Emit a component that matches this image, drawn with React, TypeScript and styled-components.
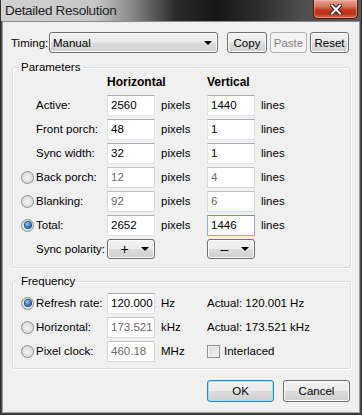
import React from 'react'
import styled, { createGlobalStyle, css } from 'styled-components'

const GlobalStyle = createGlobalStyle`
  html, body {
    margin: 0;
    padding: 0;
    background: #ffffff;
  }
  body {
    font-family: "Liberation Sans", Arial, sans-serif;
    font-size: 11.5px;
    color: #000000;
  }
`

const Window = styled.div`
  width: 362px;
  height: 415px;
  box-sizing: border-box;
  display: flex;
  flex-direction: column;
  border: 1px solid #2e2e2e;
  border-top: none;
  background: #4a4a4a;
`

const TitleBar = styled.div`
  height: 21px;
  flex: none;
  display: flex;
  align-items: flex-start;
  background: linear-gradient(
    to right,
    #d2d2d2 0,
    #c6c6c6 95px,
    #8a8a8a 130px,
    #2a2a2a 175px,
    #161616 215px,
    #2c2c2c 255px,
    #4e4e4e 300px,
    #5a5a5a 100%
  );
`

const Title = styled.div`
  flex: 1;
  padding: 3px 0 0 4px;
  font-size: 13.5px;
  letter-spacing: -0.3px;
  color: #1e1e1e;
  line-height: 16px;
`

const CloseButton = styled.div`
  width: 45px;
  height: 19px;
  margin-right: 3px;
  box-sizing: border-box;
  border: 1px solid #4a1a12;
  border-top: none;
  border-radius: 0 0 5px 5px;
  background: linear-gradient(to bottom, #e7a593 0, #d67861 35%, #c2391e 55%, #b8321a 75%, #d36a4a 100%);
  box-shadow: inset 0 0 0 1px rgba(255, 200, 180, 0.45);
  display: flex;
  align-items: center;
  justify-content: center;
`

const Body = styled.div`
  flex: 1;
  margin: 0 1px 1px;
  border: 1px solid #9a9a9a;
  border-top-color: #8a8a8a;
  background: #f0f0f0;
  padding: 10px 8px 0 8px;
  display: flex;
  flex-direction: column;
`

const TimingRow = styled.div`
  display: flex;
  align-items: center;
  height: 21px;
`

const TimingLabel = styled.span`
  width: 38px;
`

const buttonFace = css`
  box-sizing: border-box;
  border: 1px solid #707070;
  border-radius: 3px;
  background: linear-gradient(to bottom, #f2f2f2 0, #ebebeb 48%, #dddddd 52%, #cfcfcf 100%);
  box-shadow: inset 0 0 0 1px #fcfcfc;
`

const Select = styled.div<{ $width: number; $center?: boolean; $col?: number }>`
  ${buttonFace}
  grid-column: ${({ $col }) => $col ?? 'auto'};
  width: ${({ $width }) => $width}px;
  height: ${({ $center }) => ($center ? 20 : 21)}px;
  display: flex;
  align-items: center;
  padding: 0 5px 0 ${({ $center }) => ($center ? 0 : 3)}px;
  justify-content: space-between;
`

const SelectValue = styled.span<{ $center?: boolean }>`
  ${({ $center }) =>
    $center &&
    css`
      flex: 1;
      text-align: center;
      font-size: 14px;
    `}
`

const Arrow = styled.span`
  width: 0;
  height: 0;
  border-left: 4px solid transparent;
  border-right: 4px solid transparent;
  border-top: 4px solid #000000;
`

const Button = styled.div<{ $width: number; $height?: number; $disabled?: boolean; $default?: boolean }>`
  ${buttonFace}
  width: ${({ $width }) => $width}px;
  height: ${({ $height }) => $height ?? 21}px;
  display: flex;
  align-items: center;
  justify-content: center;
  ${({ $disabled }) =>
    $disabled &&
    css`
      border-color: #adb2b5;
      background: #f4f4f4;
      box-shadow: none;
      color: #838383;
    `}
  ${({ $default }) =>
    $default &&
    css`
      border-color: #3c7fb1;
      box-shadow: inset 0 0 0 1px #9ddff7;
    `}
`

const TimingButtons = styled.div`
  display: flex;
  gap: 3px;
  margin-left: 9px;
`

const GroupBox = styled.fieldset<{ $top: number; $bottom: number }>`
  margin: ${({ $top }) => $top}px 0 0 1px;
  padding: 0 0 ${({ $bottom }) => $bottom}px 8px;
  border: 1px solid #d5dfe5;
  border-radius: 3px;
  box-shadow: inset 1px 1px 0 #ffffff, 1px 1px 0 #ffffff;
  min-width: 0;
`

const Legend = styled.legend`
  padding: 0 3px;
  margin-left: -3px;
  line-height: 14px;
`

const ParamGrid = styled.div<{ $rows: string; $top?: number }>`
  display: grid;
  grid-template-columns: 15px 71px 48px 52px 48px 1fr;
  grid-template-rows: ${({ $rows }) => $rows};
  align-items: center;
  margin-top: ${({ $top }) => $top ?? 0}px;
`

const Header = styled.div<{ $col: number }>`
  grid-column: ${({ $col }) => $col};
  align-self: start;
  font-weight: bold;
  font-size: 12px;
  line-height: 16px;
  white-space: nowrap;
`

const Radio = styled.span<{ $checked?: boolean }>`
  grid-column: 1;
  width: 13px;
  height: 13px;
  box-sizing: border-box;
  border-radius: 50%;
  border: 1px solid #8e8f8f;
  background: radial-gradient(circle at 50% 55%, #f4f4f4 0, #e2e2e2 45%, #cfcfcf 100%);
  display: flex;
  align-items: center;
  justify-content: center;
  &::after {
    content: '';
    display: ${({ $checked }) => ($checked ? 'block' : 'none')};
    width: 6px;
    height: 6px;
    border-radius: 50%;
    background: radial-gradient(circle at 40% 35%, #9ad6ff 0, #2a7ac0 50%, #0d3a6e 100%);
    box-shadow: 0 0 0 1px #29507a;
  }
`

const Label = styled.span`
  grid-column: 2;
  white-space: nowrap;
`

const Input = styled.div<{ $col: number; $disabled?: boolean; $focused?: boolean }>`
  grid-column: ${({ $col }) => $col};
  box-sizing: border-box;
  height: 21px;
  background: #ffffff;
  border: 1px solid #e2e3ea;
  border-top-color: #abadb3;
  padding: 0 3px;
  display: flex;
  align-items: center;
  color: ${({ $disabled }) => ($disabled ? '#6d6d6d' : '#000000')};
  ${({ $disabled }) =>
    $disabled &&
    css`
      border-color: #d9d9d9;
      border-top-color: #c4c4c4;
    `}
  ${({ $focused }) =>
    $focused &&
    css`
      border-color: #7eb4ea;
      border-top-color: #569de5;
    `}
`

const Unit = styled.span<{ $col: number }>`
  grid-column: ${({ $col }) => $col};
  padding-left: 6px;
  white-space: nowrap;
`

const Actual = styled.span`
  grid-column: 5 / 7;
  white-space: nowrap;
`

const CheckRow = styled.div`
  grid-column: 5 / 7;
  display: flex;
  align-items: center;
  gap: 4px;
`

const CheckBox = styled.span`
  width: 13px;
  height: 13px;
  box-sizing: border-box;
  border: 1px solid #8e8f8f;
  background: linear-gradient(135deg, #dcdcdc 0, #f4f4f4 100%);
  box-shadow: inset 0 0 0 1px #f4f4f4;
`

const Footer = styled.div`
  display: flex;
  justify-content: flex-end;
  gap: 9px;
  margin-top: 11px;
  padding-right: 1px;
`

type Row = {
  label: string
  radio?: boolean
  checked?: boolean
  h: string
  v: string
  disabled?: boolean
  focusV?: boolean
}

const rows: Row[] = [
  { label: 'Active:', h: '2560', v: '1440' },
  { label: 'Front porch:', h: '48', v: '1' },
  { label: 'Sync width:', h: '32', v: '1' },
  { label: 'Back porch:', radio: true, h: '12', v: '4', disabled: true },
  { label: 'Blanking:', radio: true, h: '92', v: '6', disabled: true },
  { label: 'Total:', radio: true, checked: true, h: '2652', v: '1446', focusV: true },
]

const freq = [
  { label: 'Refresh rate:', checked: true, value: '120.000', unit: 'Hz', actual: 'Actual: 120.001 Hz' },
  { label: 'Horizontal:', value: '173.521', unit: 'kHz', actual: 'Actual: 173.521 kHz' },
  { label: 'Pixel clock:', value: '460.18', unit: 'MHz' },
]

export default function App() {
  return (
    <>
      <GlobalStyle />
      <Window>
        <TitleBar>
          <Title>Detailed Resolution</Title>
          <CloseButton>
            <svg width="12" height="11" viewBox="0 0 12 11">
              <path d="M2 1.5 L10 9.5 M10 1.5 L2 9.5" stroke="#3a1a14" strokeWidth="4" strokeLinecap="square" />
              <path d="M2 1.5 L10 9.5 M10 1.5 L2 9.5" stroke="#ffffff" strokeWidth="2" strokeLinecap="square" />
            </svg>
          </CloseButton>
        </TitleBar>
        <Body>
          <TimingRow>
            <TimingLabel>Timing:</TimingLabel>
            <Select $width={169}>
              <SelectValue>Manual</SelectValue>
              <Arrow />
            </Select>
            <TimingButtons>
              <Button $width={40}>Copy</Button>
              <Button $width={37} $disabled>
                Paste
              </Button>
              <Button $width={39}>Reset</Button>
            </TimingButtons>
          </TimingRow>

          <GroupBox $top={7} $bottom={6}>
            <Legend>Parameters</Legend>
            <ParamGrid $rows="19px repeat(7, 24px)">
              <Header $col={3}>Horizontal</Header>
              <Header $col={5}>Vertical</Header>
              {rows.map((r) => (
                <React.Fragment key={r.label}>
                  {r.radio ? <Radio $checked={r.checked} /> : <span />}
                  <Label>{r.label}</Label>
                  <Input $col={3} $disabled={r.disabled}>
                    {r.h}
                  </Input>
                  <Unit $col={4}>pixels</Unit>
                  <Input $col={5} $disabled={r.disabled} $focused={r.focusV}>
                    {r.v}
                  </Input>
                  <Unit $col={6}>lines</Unit>
                </React.Fragment>
              ))}
              <span />
              <Label>Sync polarity:</Label>
              <Select $width={48} $center $col={3}>
                <SelectValue $center>+</SelectValue>
                <Arrow />
              </Select>
              <Select $width={48} $center $col={5}>
                <SelectValue $center>–</SelectValue>
                <Arrow />
              </Select>
            </ParamGrid>
          </GroupBox>

          <GroupBox $top={6} $bottom={5}>
            <Legend>Frequency</Legend>
            <ParamGrid $rows="repeat(3, 24px)" $top={3}>
              {freq.map((f) => (
                <React.Fragment key={f.label}>
                  <Radio $checked={f.checked} />
                  <Label>{f.label}</Label>
                  <Input $col={3} $disabled={!f.checked}>
                    {f.value}
                  </Input>
                  <Unit $col={4}>{f.unit}</Unit>
                  {f.actual ? (
                    <Actual>{f.actual}</Actual>
                  ) : (
                    <CheckRow>
                      <CheckBox />
                      <span>Interlaced</span>
                    </CheckRow>
                  )}
                </React.Fragment>
              ))}
            </ParamGrid>
          </GroupBox>

          <Footer>
            <Button $width={67} $height={22} $default>
              OK
            </Button>
            <Button $width={67} $height={22}>
              Cancel
            </Button>
          </Footer>
        </Body>
      </Window>
    </>
  )
}
